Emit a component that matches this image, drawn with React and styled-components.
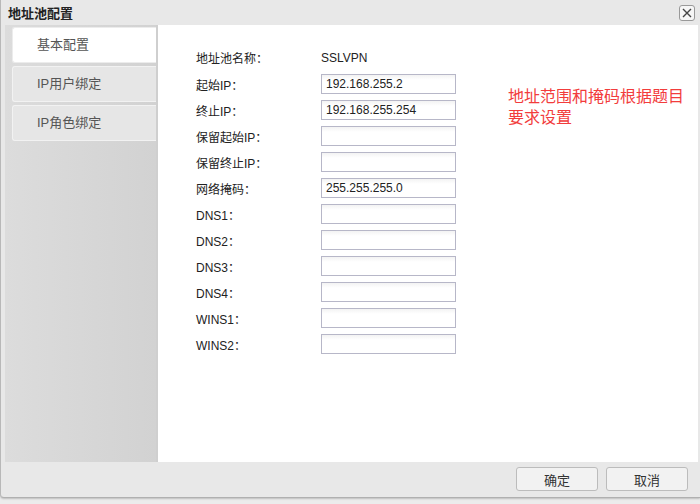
import React from "react";
import styled, { createGlobalStyle } from "styled-components";

const Global = createGlobalStyle`
  html, body { margin: 0; padding: 0; background: #f0f0f0; }
  body { font-family: "Liberation Sans", Arial, "Noto Sans CJK SC", sans-serif; }
  * { box-sizing: border-box; }
`;

const Page = styled.div`
  width: 700px;
  height: 504px;
  background: #ececec;
  overflow: hidden;
`;

const Window = styled.div`
  width: 700px;
  height: 498px;
  display: flex;
  flex-direction: column;
  background: #e8e8e8;
  border-left: 1px solid #b8b8b8;
  border-bottom: 1px solid #b0b0b0;
  border-bottom-left-radius: 4px;
  box-shadow: 0 1px 2px rgba(0,0,0,0.2);
`;

const TitleBar = styled.div`
  height: 25px;
  display: flex;
  align-items: center;
  justify-content: space-between;
  padding: 0 5px 0 7px;
  font-size: 13px;
  color: #222;
  font-weight: 600;
`;

const CloseBtn = styled.div`
  width: 16px;
  height: 16px;
  margin-top: 1px;
  border: 1px solid #999;
  border-radius: 3px;
  background: #f6f6f6;
  display: flex;
  align-items: center;
  justify-content: center;
`;

const Body = styled.div`
  height: 437px;
  display: flex;
  margin: 0 5px 0 4px;
`;

const Sidebar = styled.div`
  width: 153px;
  background: linear-gradient(90deg, #dcdcdc, #d2d2d2);
  border-right: 2px solid #cfcfcf;
  padding: 2px 0 0 7px;
  display: flex;
  flex-direction: column;
  gap: 3px;
`;

const Tab = styled.div`
  width: 144px;
  height: 36px;
  display: flex;
  align-items: center;
  padding: 0 0 3px 24px;
  font-size: 13px;
  color: #555;
  background: ${(p) => (p.$active ? "#ffffff" : "#e6e6e6")};
  border: 1px solid ${(p) => (p.$active ? "#ececec" : "#f2f2f2")};
  border-right: none;
  border-radius: 3px 0 0 3px;
`;

const Content = styled.div`
  flex: 1;
  background: #fff;
  display: flex;
  padding: 19px 0 0 38px;
`;

const Form = styled.div`
  display: flex;
  flex-direction: column;
`;

const Row = styled.div`
  height: ${(p) => (p.$first ? 27 : 26)}px;
  display: flex;
  align-items: center;
`;

const Label = styled.div`
  width: 125px;
  font-size: 12px;
  color: #222;
`;

const Value = styled.div`
  font-size: 12px;
  color: #222;
`;

const Input = styled.div`
  width: 135px;
  height: 20px;
  border: 1px solid #b7b7c8;
  background: linear-gradient(180deg, #f3f3f3 0px, #ffffff 5px);
  font-size: 12px;
  color: #222;
  padding-left: 4px;
  display: flex;
  align-items: center;
`;

const Note = styled.div`
  margin: 42px 0 0 52px;
  font-size: 16px;
  line-height: 21px;
  color: #f23c3c;
  width: 190px;
`;

const Footer = styled.div`
  flex: 1;
  display: flex;
  justify-content: flex-end;
  align-items: flex-start;
  gap: 8px;
  padding: 5px 12px 0 0;
`;

const Button = styled.div`
  width: 82px;
  height: 24px;
  border: 1px solid #bcbcbc;
  border-radius: 3px;
  background: #f2f2f2;
  font-size: 13px;
  color: #333;
  display: flex;
  align-items: center;
  justify-content: center;
`;

const rows = [
  { label: "起始IP：", value: "192.168.255.2" },
  { label: "终止IP：", value: "192.168.255.254" },
  { label: "保留起始IP：", value: "" },
  { label: "保留终止IP：", value: "" },
  { label: "网络掩码：", value: "255.255.255.0" },
  { label: "DNS1：", value: "" },
  { label: "DNS2：", value: "" },
  { label: "DNS3：", value: "" },
  { label: "DNS4：", value: "" },
  { label: "WINS1：", value: "" },
  { label: "WINS2：", value: "" },
];

export default function App() {
  return (
    <Page>
      <Global />
      <Window>
        <TitleBar>
          <span>地址池配置</span>
          <CloseBtn>
            <svg width="10" height="10" viewBox="0 0 10 10">
              <path d="M1 1L9 9M9 1L1 9" stroke="#444" strokeWidth="1.4" />
            </svg>
          </CloseBtn>
        </TitleBar>
        <Body>
          <Sidebar>
            <Tab $active>基本配置</Tab>
            <Tab>IP用户绑定</Tab>
            <Tab>IP角色绑定</Tab>
          </Sidebar>
          <Content>
            <Form>
              <Row $first>
                <Label>地址池名称：</Label>
                <Value>SSLVPN</Value>
              </Row>
              {rows.map((r) => (
                <Row key={r.label}>
                  <Label>{r.label}</Label>
                  <Input>{r.value}</Input>
                </Row>
              ))}
            </Form>
            <Note>地址范围和掩码根据题目要求设置</Note>
          </Content>
        </Body>
        <Footer>
          <Button>确定</Button>
          <Button>取消</Button>
        </Footer>
      </Window>
    </Page>
  );
}
